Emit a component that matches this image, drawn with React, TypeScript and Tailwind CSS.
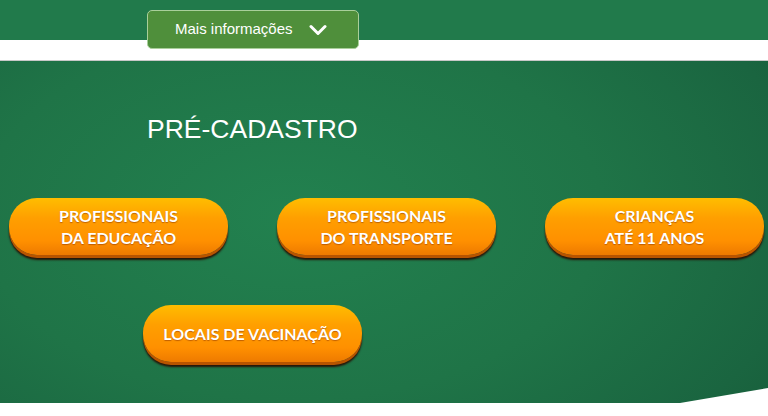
import React from 'react';

const buttons = [
  ['PROFISSIONAIS', 'DA EDUCAÇÃO'],
  ['PROFISSIONAIS', 'DO TRANSPORTE'],
  ['CRIANÇAS', 'ATÉ 11 ANOS'],
];

const OrangeButton: React.FC<{ lines: string[] }> = ({ lines }) => (
  <button
    className="w-[219px] h-[57px] rounded-[28px] flex flex-col items-center justify-center text-white font-bold text-[16px] leading-[22px] bg-[linear-gradient(180deg,#ffbd00_0%,#ff9f00_35%,#ff9000_75%,#ee7a00_100%)] shadow-[0_3px_0_#b85400,0_5px_2px_rgba(40,10,0,0.9)] [text-shadow:0_1px_1px_rgba(150,60,0,0.6)]"
    style={{ fontFamily: 'Lato, "Noto Sans", sans-serif' }}
  >
    {lines.map((l) => (
      <span key={l}>{l}</span>
    ))}
  </button>
);

export default function App() {
  return (
    <div className="w-[768px] h-[416px] bg-white overflow-hidden" style={{ fontFamily: '"Liberation Sans", Arial, sans-serif' }}>
      <div className="h-[40px] bg-[#217a4b]" />
      <div className="h-[21px] bg-white border-b border-[#c8c8c8]" />
      <div className="relative h-[342px] bg-[radial-gradient(ellipse_90%_120%_at_38%_45%,#22814f_0%,#1f7447_45%,#1a6540_75%,#155634_100%)] [clip-path:polygon(0_0,100%_0,100%_327px,680px_100%,0_100%)]">
        <div className="pl-[147px] pt-[51px]">
          <h1 className="text-white text-[26.5px] leading-[34px]">PRÉ-CADASTRO</h1>
        </div>
        <div className="flex gap-[49px] pl-[9px] mt-[52px]">
          {buttons.map((b, i) => (
            <OrangeButton key={i} lines={b} />
          ))}
        </div>
        <div className="flex pl-[143px] mt-[50px]">
          <OrangeButton lines={['LOCAIS DE VACINAÇÃO']} />
        </div>
      </div>

      {/* dropdown tab overlapping the header */}
      <div className="absolute left-[147px] top-[10px] w-[212px] h-[39px] rounded-[5px] bg-[#4f8f3b] border border-[#a9cf9a] flex items-center pl-[27px] gap-[16px] text-white text-[15px]">
        <span>Mais informações</span>
        <svg width="18" height="12" viewBox="0 0 18 12" fill="none">
          <path d="M2 2.5 L9 9.5 L16 2.5" stroke="white" strokeWidth="3" strokeLinecap="round" strokeLinejoin="round" />
        </svg>
      </div>
    </div>
  );
}
